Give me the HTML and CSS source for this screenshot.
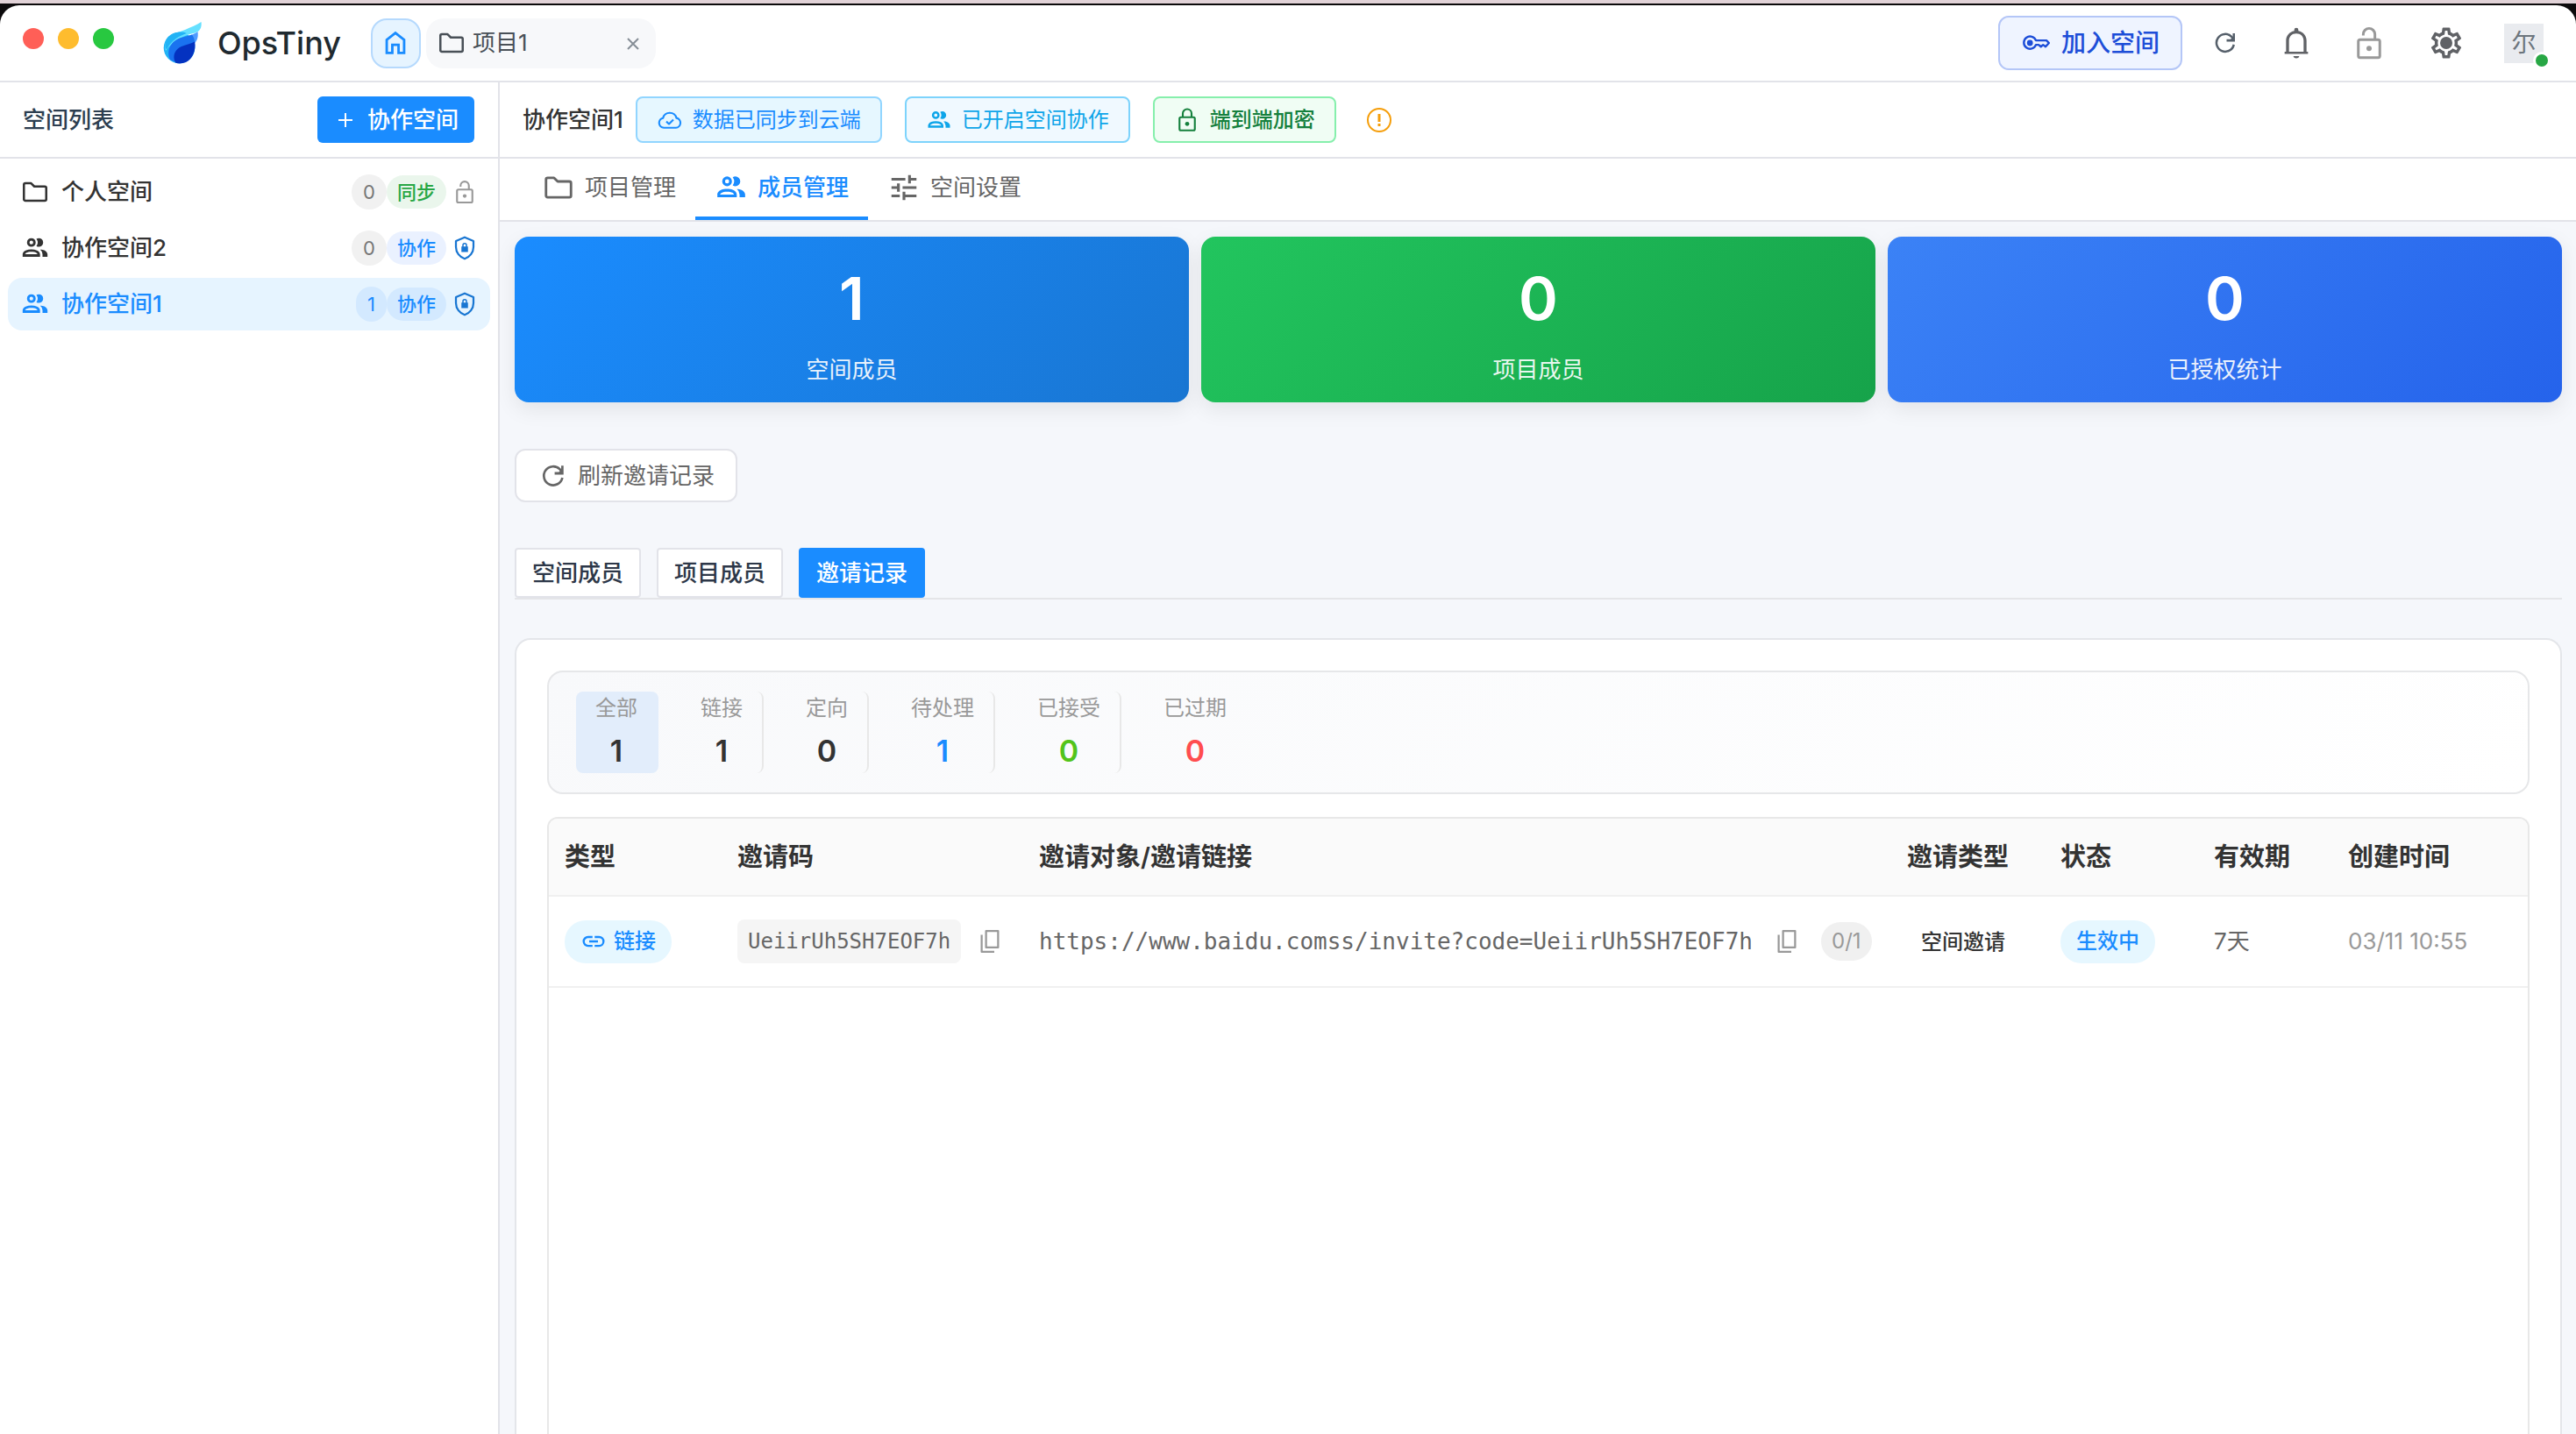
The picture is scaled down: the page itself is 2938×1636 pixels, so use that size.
FILE: index.html
```html
<!DOCTYPE html>
<html lang="zh-CN">

<head>
    <meta charset="UTF-8">
    <meta name="viewport" content="width=device-width, initial-scale=1.0">
    <title>OpsTiny</title>
    <link rel="stylesheet" href="styles.css">
</head>

<body>
    <!-- shared icons -->
    <svg class="sprite" width="0" height="0" aria-hidden="true">
        <symbol id="i-folder" viewBox="0 0 24 24">
            <path d="M3 6.2c0-.7.5-1.2 1.2-1.2h4.6l2.6 2.6h8.4c.7 0 1.2.5 1.2 1.2v9c0 .7-.5 1.2-1.2 1.2H4.2c-.7 0-1.2-.5-1.2-1.2z" fill="none" stroke="currentColor" stroke-width="1.8" stroke-linejoin="round"/>
        </symbol>
        <symbol id="i-people" viewBox="0 0 24 24">
            <path fill="currentColor" d="M13.07 10.41A5 5 0 0 0 13.07 4.59A3.39 3.39 0 0 1 15 4A3.5 3.5 0 0 1 15 11A3.39 3.39 0 0 1 13.07 10.41M5.5 7.5A3.5 3.5 0 1 1 9 11A3.5 3.5 0 0 1 5.5 7.5M7.5 7.5A1.5 1.5 0 1 0 9 6A1.5 1.5 0 0 0 7.5 7.5M16 17V19H2V17S2 13 9 13 16 17 16 17M14 17C13.86 16.22 12.67 15 9 15S4.07 16.31 4 17M15.95 13A5.32 5.32 0 0 1 18 17V19H22V17S22 13.37 15.94 13Z"/>
        </symbol>
        <symbol id="i-tune" viewBox="0 0 24 24">
            <path fill="currentColor" d="M3 17v2h6v-2H3zM3 5v2h10V5H3zm10 16v-2h8v-2h-8v-2h-2v6h2zM7 9v2H3v2h4v2h2V9H7zm14 4v-2H11v2h10zm-6-4h2V7h4V5h-4V3h-2v6z"/>
        </symbol>
        <symbol id="i-refresh" viewBox="0 0 24 24">
            <path fill="none" stroke="currentColor" stroke-width="2" d="M19.800 13.500a8 8 0 1 1-2.100-7.200L19.500 8.400"/>
            <path fill="currentColor" d="M20.800 3.200v7.600h-7.600V8.600h3.600l2-2V3.200z"/>
        </symbol>
        <symbol id="i-unlock" viewBox="0 0 24 24">
            <rect x="5" y="9.800" width="14" height="11.800" rx="1.200" fill="none" stroke="currentColor" stroke-width="1.700"/>
            <path fill="none" stroke="currentColor" stroke-width="1.700" d="M8.200 7.200V6.300a3.800 3.800 0 0 1 7.600 0v3.500"/>
            <circle cx="12" cy="15.600" r="1.700" fill="currentColor"/>
        </symbol>
        <symbol id="i-lock" viewBox="0 0 24 24">
            <rect x="5" y="9.400" width="14" height="12" rx="1.200" fill="none" stroke="currentColor" stroke-width="1.700"/>
            <path fill="none" stroke="currentColor" stroke-width="1.700" d="M8 9.400V6a4 4 0 0 1 8 0v3.400"/>
            <circle cx="12" cy="15.400" r="1.900" fill="currentColor"/>
        </symbol>
        <symbol id="i-shield" viewBox="0 0 24 24">
            <path fill="none" stroke="currentColor" stroke-width="1.8" stroke-linejoin="round" d="M12 2.2l8 3.4v5.4c0 5-3.4 9.3-8 10.8-4.600-1.500-8-5.800-8-10.800V5.600z"/>
            <path fill="currentColor" d="M9.800 10.500V9.400a2.200 2.200 0 0 1 4.400 0v1.100h.8v5H9v-5zm1.200 0h2V9.400a1 1 0 0 0-2 0z"/>
        </symbol>
        <symbol id="i-copy" viewBox="0 0 24 24">
            <path fill="none" stroke="currentColor" stroke-width="1.8" stroke-linejoin="round" d="M8.500 2.500h11v15h-11zM4.500 6v15.500H16"/>
        </symbol>
        <symbol id="i-link" viewBox="0 0 24 24">
            <path fill="currentColor" d="M3.900 12c0-1.710 1.390-3.100 3.100-3.100h4V7H7a5 5 0 0 0 0 10h4v-1.900H7c-1.710 0-3.100-1.390-3.100-3.100M8 13h8v-2H8m9-4h-4v1.900h4a3.100 3.100 0 0 1 0 6.200h-4V17h4a5 5 0 0 0 0-10z"/>
        </symbol>
    </svg>

    <div class="window">
        <header class="titlebar">
            <div class="lights">
                <span class="light red"></span>
                <span class="light yellow"></span>
                <span class="light green"></span>
            </div>
            <div class="brand">
                <svg class="logo" viewBox="0 0 44 48">
                    <circle cx="18.500" cy="29.500" r="17.800" fill="#22b3f5"/>
                    <path fill="#66e0ff" d="M7 17C17 11 33 7 43.500 0c1 7-2 11-7 12.500C25 15 12 20 3 33c-2-7 0-12 4-16z"/>
                    <path fill="#22b3f5" d="M5 18c6-6 15-8 22-5-9 3-17 8-22 17-3 4-4-6 0-12z"/>
                    <path fill="#4f9bff" d="M16 20c8-3 17-4 23.500-9 1 7-1 12-6 15z"/>
                    <path fill="#1a73f0" d="M8 43C3 33 9 22 19 18.500c6-2 11-3 14-4 3 4 4 10 3 16C32 44 18 50 8 43z"/>
                    <path fill="#0432c0" d="M14 46.500C10 38 14 31 21 28c6-2.500 11-3 15-5.500 2 11-3 20-10 23.500-4 1.500-8 2-12 .5z"/>
                </svg>
                <span class="brand-name">OpsTiny</span>
            </div>
            <nav class="win-tabs">
                <button class="home" aria-label="首页">
                    <svg class="icon s34" viewBox="0 0 24 24"><path fill="none" stroke="currentColor" stroke-width="2" d="M5 20V9.500L12 4l7 5.500V20h-4.500v-6.500h-5V20z"/></svg>
                </button>
                <div class="win-tab">
                    <svg class="icon s34"><use href="#i-folder"/></svg>
                    <span>项目1</span>
                    <button class="close" aria-label="关闭">
                        <svg class="icon s20" viewBox="0 0 20 20"><path stroke="currentColor" stroke-width="2" d="M4 5l12 12M16 5L4 17"/></svg>
                    </button>
                </div>
            </nav>
            <div class="actions">
                <button class="join">
                    <svg class="icon s34" viewBox="0 0 24 24">
                        <path fill="none" stroke="currentColor" stroke-width="1.700" stroke-linejoin="round" d="M12 10h8.500l2 2-2.700 3-2-1.500-1.800 1.500-1.800-1.500H12a5 5 0 1 1 0-3.500z"/>
                        <circle cx="7.200" cy="12" r="2.400" fill="currentColor"/>
                    </svg>
                    <span>加入空间</span>
                </button>
                <button class="tool refresh" aria-label="刷新"><svg class="icon s30"><use href="#i-refresh"/></svg></button>
                <button class="tool" aria-label="通知">
                    <svg class="icon s40" viewBox="0 0 24 24"><path fill="currentColor" d="M12 22.500c1.200 0 2-.6 2-1.500h-4c0 .9.800 1.500 2 1.500M19 18v-7.500c0-3.400-2.200-6-5.600-6.700V3a1.400 1.400 0 0 0-2.800 0v.8C7.200 4.500 5 7.100 5 10.500V18H4v1.500h16V18zM7 18v-7.500c0-3 2-5 5-5s5 2 5 5V18z"/></svg>
                </button>
                <button class="tool light-tool" aria-label="解锁"><svg class="icon s42"><use href="#i-unlock"/></svg></button>
                <button class="tool" aria-label="设置">
                    <svg class="icon s42" viewBox="0 0 24 24"><circle cx="12" cy="12" r="4" fill="currentColor"/><path fill="currentColor" d="M10,22C9.750,22 9.540,21.820 9.500,21.580L9.130,18.930C8.500,18.680 7.960,18.340 7.440,17.940L4.950,18.950C4.730,19.030 4.460,18.950 4.340,18.730L2.340,15.270C2.210,15.050 2.270,14.780 2.460,14.630L4.570,12.970L4.500,12L4.570,11L2.460,9.370C2.270,9.220 2.210,8.950 2.340,8.730L4.340,5.270C4.460,5.050 4.730,4.960 4.950,5.050L7.440,6.050C7.960,5.660 8.500,5.320 9.130,5.070L9.500,2.420C9.540,2.180 9.750,2 10,2H14C14.250,2 14.460,2.180 14.500,2.420L14.870,5.070C15.500,5.320 16.040,5.660 16.560,6.050L19.050,5.050C19.270,4.960 19.540,5.050 19.660,5.270L21.660,8.730C21.790,8.950 21.730,9.220 21.540,9.370L19.430,11L19.500,12L19.430,13L21.540,14.630C21.730,14.780 21.790,15.050 21.660,15.270L19.660,18.730C19.540,18.950 19.270,19.040 19.050,18.950L16.560,17.950C16.040,18.340 15.500,18.680 14.870,18.930L14.500,21.580C14.460,21.820 14.250,22 14,22H10M11.250,4L10.880,6.610C9.680,6.860 8.620,7.500 7.850,8.390L5.440,7.350L4.690,8.650L6.800,10.200C6.400,11.370 6.400,12.640 6.800,13.800L4.680,15.360L5.430,16.660L7.860,15.620C8.630,16.500 9.680,17.140 10.870,17.380L11.240,20H12.760L13.130,17.390C14.320,17.140 15.370,16.500 16.140,15.620L18.570,16.660L19.320,15.360L17.200,13.810C17.600,12.640 17.600,11.370 17.200,10.200L19.310,8.650L18.560,7.350L16.150,8.390C15.380,7.500 14.320,6.860 13.120,6.620L12.750,4H11.250Z"/></svg>
                </button>
                <div class="avatar">尔<span class="online"></span></div>
            </div>
        </header>

        <div class="layout">
            <aside class="sidebar">
                <div class="sidebar-head">
                    <h2>空间列表</h2>
                    <button class="create"><svg class="icon s20" viewBox="0 0 20 20"><path stroke="currentColor" stroke-width="2" d="M10 2v16M2 10h16"/></svg>协作空间</button>
                </div>
                <ul class="spaces">
                    <li class="space">
                        <svg class="icon s34"><use href="#i-folder"/></svg>
                        <span class="space-name">个人空间</span>
                        <span class="count">0</span>
                        <span class="tag sync">同步</span>
                        <svg class="icon s30 grey"><use href="#i-unlock"/></svg>
                    </li>
                    <li class="space">
                        <svg class="icon s34"><use href="#i-people"/></svg>
                        <span class="space-name">协作空间2</span>
                        <span class="count">0</span>
                        <span class="tag">协作</span>
                        <svg class="icon s30 shield"><use href="#i-shield"/></svg>
                    </li>
                    <li class="space active">
                        <svg class="icon s34"><use href="#i-people"/></svg>
                        <span class="space-name">协作空间1</span>
                        <span class="count">1</span>
                        <span class="tag">协作</span>
                        <svg class="icon s30 shield"><use href="#i-shield"/></svg>
                    </li>
                </ul>
            </aside>

            <main class="main">
                <div class="space-head">
                    <h1>协作空间1</h1>
                    <span class="badge cloud">
                        <svg class="icon s30" viewBox="0 0 24 24"><path fill="none" stroke="currentColor" stroke-width="1.700" stroke-linejoin="round" d="M6.500 19a4.500 4.500 0 0 1-.7-8.900 6.300 6.300 0 0 1 12.200 0A4.500 4.500 0 0 1 17.500 19zM8.800 13.300l2.400 2.300 4-4"/></svg>
                        数据已同步到云端
                    </span>
                    <span class="badge team"><svg class="icon s30"><use href="#i-people"/></svg>已开启空间协作</span>
                    <span class="badge secure"><svg class="icon s30"><use href="#i-lock"/></svg>端到端加密</span>
                    <svg class="icon s30 warn" viewBox="0 0 30 30"><circle cx="15" cy="15" r="13" fill="none" stroke="currentColor" stroke-width="2"/><path stroke="currentColor" stroke-width="3" d="M15 8v9M15 19v3"/></svg>
                </div>

                <nav class="tabs">
                    <a class="tab" href="#"><svg class="icon s38"><use href="#i-folder"/></svg>项目管理</a>
                    <a class="tab active" href="#"><svg class="icon s38"><use href="#i-people"/></svg>成员管理</a>
                    <a class="tab" href="#"><svg class="icon s38"><use href="#i-tune"/></svg>空间设置</a>
                </nav>

                <div class="content">
                    <section class="cards">
                        <div class="card blue"><b>1</b><span>空间成员</span></div>
                        <div class="card green"><b>0</b><span>项目成员</span></div>
                        <div class="card indigo"><b>0</b><span>已授权统计</span></div>
                    </section>

                    <button class="reload"><svg class="icon s32"><use href="#i-refresh"/></svg>刷新邀请记录</button>

                    <div class="segments">
                        <button class="segment">空间成员</button>
                        <button class="segment">项目成员</button>
                        <button class="segment active">邀请记录</button>
                    </div>

                    <section class="panel">
                        <div class="filters">
                            <button class="filter active"><span>全部</span><b>1</b></button>
                            <button class="filter"><span>链接</span><b>1</b></button>
                            <button class="filter"><span>定向</span><b>0</b></button>
                            <button class="filter pending"><span>待处理</span><b>1</b></button>
                            <button class="filter accepted"><span>已接受</span><b>0</b></button>
                            <button class="filter expired"><span>已过期</span><b>0</b></button>
                        </div>

                        <div class="table-wrap">
                            <table class="invites">
                                <colgroup>
                                    <col class="c-type">
                                    <col class="c-code">
                                    <col>
                                    <col class="c-kind">
                                    <col class="c-state">
                                    <col class="c-valid">
                                    <col class="c-time">
                                </colgroup>
                                <thead>
                                    <tr>
                                        <th>类型</th>
                                        <th>邀请码</th>
                                        <th>邀请对象/邀请链接</th>
                                        <th>邀请类型</th>
                                        <th>状态</th>
                                        <th>有效期</th>
                                        <th>创建时间</th>
                                    </tr>
                                </thead>
                                <tbody>
                                    <tr>
                                        <td><span class="pill"><svg class="icon s30"><use href="#i-link"/></svg>链接</span></td>
                                        <td>
                                            <div class="cell">
                                                <code class="code">UeiirUh5SH7EOF7h</code>
                                                <button class="copy" aria-label="复制"><svg class="icon s30"><use href="#i-copy"/></svg></button>
                                            </div>
                                        </td>
                                        <td>
                                            <div class="cell target">
                                                <span class="url">https://www.baidu.comss/invite?code=UeiirUh5SH7EOF7h</span>
                                                <button class="copy" aria-label="复制"><svg class="icon s30"><use href="#i-copy"/></svg></button>
                                                <span class="used">0/1</span>
                                            </div>
                                        </td>
                                        <td><span class="kind">空间邀请</span></td>
                                        <td><span class="pill">生效中</span></td>
                                        <td class="valid">7天</td>
                                        <td class="time">03/11 10:55</td>
                                    </tr>
                                </tbody>
                            </table>
                        </div>
                    </section>
                </div>
            </main>
        </div>
    </div>
</body>

</html>
```
FILE: styles.css
```css
* {
    box-sizing: border-box;
}

html {
    height: 100%;
    background-color: #0c0a0b;
}

body {
    height: 100%;
    margin: 0;
    padding-top: 2px;
    border-top: 4px solid #e1d2d7;
    overflow: hidden;
    font-family: Inter, "Noto Sans CJK SC", sans-serif;
    font-size: 26px;
    line-height: 38px;
    color: #333;
}

button {
    font: inherit;
    color: inherit;
    background: none;
    border: none;
    padding: 0;
    cursor: pointer;
}

a {
    text-decoration: none;
}

h1,
h2 {
    margin: 0;
    font-size: 26px;
    font-weight: 500;
}

.sprite {
    position: absolute;
}

.icon {
    display: block;
    flex: none;
}

.s20 { width: 20px; height: 20px; }
.s30 { width: 30px; height: 30px; }
.s32 { width: 32px; height: 32px; }
.s34 { width: 34px; height: 34px; }
.s38 { width: 38px; height: 38px; }
.s40 { width: 40px; height: 40px; }
.s42 { width: 42px; height: 42px; }

.window {
    height: 100%;
    display: flex;
    flex-direction: column;
    background-color: #fff;
    border-radius: 22px 22px 0 0;
    overflow: hidden;
}

/* title bar */
.titlebar {
    flex: none;
    display: flex;
    align-items: center;
    height: 88px;
    padding: 0 37px 0 26px;
    border-bottom: 2px solid #e2e3e9;
}

.lights {
    display: flex;
    gap: 16px;
    margin-bottom: 10px;
}

.light {
    width: 24px;
    height: 24px;
    border-radius: 50%;
}

.red { background-color: #ff5f57; }
.yellow { background-color: #febc2e; }
.green { background-color: #28c840; }

.brand {
    display: flex;
    align-items: center;
    gap: 18px;
    margin-left: 56px;
}

.logo {
    width: 44px;
    height: 48px;
}

.brand-name {
    font-size: 36px;
    font-weight: 500;
    color: #1f2a30;
}

.win-tabs {
    display: flex;
    gap: 6px;
    margin-left: 34px;
}

.home {
    display: flex;
    align-items: center;
    justify-content: center;
    width: 57px;
    height: 57px;
    color: #1a8cff;
    background-color: #e6f4ff;
    border: 2px solid #b5d9fd;
    border-radius: 18px;
}

.win-tab {
    display: flex;
    align-items: center;
    gap: 7px;
    width: 262px;
    height: 57px;
    padding: 0 16px 0 12px;
    color: #495057;
    background-color: #f7f8fa;
    border-radius: 20px;
}

.close {
    margin-left: auto;
    color: #868e96;
}

.actions {
    display: flex;
    align-items: center;
    margin-left: auto;
}

.join {
    display: flex;
    align-items: center;
    gap: 12px;
    height: 62px;
    padding: 0 24px;
    font-size: 28px;
    font-weight: 500;
    color: #1d4ed8;
    background-color: #eff4ff;
    border: 2px solid #b4c6f7;
    border-radius: 12px;
}

.tool {
    margin-left: 46px;
    color: #606266;
}

.tool.refresh {
    margin-left: 34px;
    color: #56606b;
}

.light-tool {
    margin-left: 42px;
    color: #999;
}

.avatar {
    position: relative;
    width: 45px;
    height: 45px;
    margin-left: 45px;
    line-height: 44px;
    text-align: center;
    font-size: 28px;
    color: #6c757d;
    background-color: #e9ebef;
}

.online {
    position: absolute;
    right: -8px;
    bottom: -7px;
    width: 20px;
    height: 20px;
    background-color: #28a745;
    border: 3px solid #fff;
    border-radius: 50%;
}

.layout {
    flex: 1;
    min-height: 0;
    display: flex;
}

/* sidebar */
.sidebar {
    flex: none;
    width: 570px;
    border-right: 2px solid #e2e3e9;
}

.sidebar-head,
.space-head {
    display: flex;
    align-items: center;
    height: 87px;
    border-bottom: 2px solid #e2e3e9;
}

.sidebar-head {
    justify-content: space-between;
    padding: 0 27px 0 26px;
    color: #2c3e50;
}

.create {
    display: flex;
    align-items: center;
    gap: 15px;
    height: 53px;
    padding: 0 18px 0 22px;
    font-weight: 500;
    color: #fff;
    background-color: #1a8cff;
    border-radius: 6px;
}

.spaces {
    list-style: none;
    display: flex;
    flex-direction: column;
    gap: 4px;
    margin: 0;
    padding: 8px 9px;
}

.space {
    display: flex;
    align-items: center;
    height: 60px;
    padding: 0 14px;
    border-radius: 16px;
}

.space-name {
    flex: 1;
    margin-left: 13px;
    font-weight: 500;
}

.count,
.tag {
    line-height: 38px;
    font-size: 22px;
    border-radius: 20px;
}

.count {
    padding: 1px 13px;
    color: #777;
    background-color: #f1f1f1;
}

.tag {
    margin-right: 6px;
    padding: 0 12px;
    font-weight: 500;
    color: #1a8cff;
    background-color: #eaf1ff;
}

.tag.sync {
    color: #28a745;
    background-color: #eaf6ec;
}

.grey {
    color: #999;
}

.shield {
    color: #1976d2;
}

.space.active {
    color: #1a8cff;
    background-color: #e6f4ff;
}

.active .count,
.active .tag {
    color: #1a8cff;
    background-color: #d3e9ff;
}

/* main */
.main {
    flex: 1;
    min-width: 0;
    display: flex;
    flex-direction: column;
    background-color: #f5f7fb;
}

.space-head {
    flex: none;
    padding-left: 26px;
    background-color: #fff;
}

.badge {
    display: flex;
    align-items: center;
    gap: 11px;
    height: 53px;
    margin-right: 26px;
    padding: 0 22px;
    font-size: 24px;
    border: 2px solid;
    border-radius: 8px;
}

.cloud {
    margin-left: 14px;
    color: #1a8cff;
    background-color: #e6f7ff;
    border-color: #91d5ff;
}

.team {
    color: #0ea5e9;
    background-color: #f0f9ff;
    border-color: #7dd3fc;
}

.secure {
    font-weight: 500;
    color: #15803d;
    background-color: #f0fdf4;
    border-color: #86efac;
}

.warn {
    margin-left: 8px;
    color: #f59e0b;
}

.tabs {
    flex: none;
    display: flex;
    height: 72px;
    padding-left: 26px;
    background-color: #fff;
    border-bottom: 2px solid #e2e3e9;
}

.tab {
    display: flex;
    align-items: center;
    gap: 11px;
    padding: 0 22px;
    color: #666;
    border-bottom: 4px solid transparent;
}

.tab.active {
    font-weight: 500;
    color: #1a8cff;
    border-bottom-color: #1a8cff;
}

.content {
    flex: 1;
    min-height: 0;
    display: flex;
    flex-direction: column;
    padding: 17px 16px 0 17px;
}

.cards {
    flex: none;
    display: grid;
    grid-template-columns: repeat(3, 1fr);
    gap: 14px;
}

.card {
    display: flex;
    flex-direction: column;
    align-items: center;
    gap: 16px;
    height: 189px;
    padding-top: 30px;
    color: #fff;
    border-radius: 16px;
    box-shadow: 0 8px 24px rgba(0, 0, 0, 0.08);
}

.card b {
    font-size: 68px;
    line-height: 80px;
    font-weight: 600;
}

.card span {
    line-height: 52px;
    opacity: 0.9;
}

.blue { background: linear-gradient(135deg, #1a8cff, #1976d2); }
.green.card { background: linear-gradient(135deg, #22c55e, #16a34a); }
.indigo { background: linear-gradient(135deg, #3b82f6, #2563eb); }

.reload {
    flex: none;
    align-self: flex-start;
    display: flex;
    align-items: center;
    gap: 12px;
    height: 61px;
    margin-top: 53px;
    padding: 0 24px 0 26px;
    color: #666;
    background-color: #fff;
    border: 2px solid #e2e3e9;
    border-radius: 12px;
}

.segments {
    flex: none;
    display: flex;
    gap: 18px;
    margin-top: 52px;
    border-bottom: 2px solid #e4e5e8;
}

.segment {
    height: 57px;
    padding: 0 18px;
    font-weight: 500;
    color: #2d3748;
    background-color: #fff;
    border: 2px solid #e2e3e9;
    border-radius: 4px;
}

.segment.active {
    color: #fff;
    background-color: #1a8cff;
    border-color: #1a8cff;
}

.panel {
    flex: 1;
    min-height: 0;
    display: flex;
    flex-direction: column;
    gap: 26px;
    margin-top: 44px;
    padding: 35px 35px 0;
    background-color: #fff;
    border: 2px solid #e4e6ea;
    border-bottom: none;
    border-radius: 18px 18px 0 0;
}

/* invite filters */
.filters {
    flex: none;
    display: flex;
    gap: 26px;
    padding: 22px 31px;
    background: linear-gradient(135deg, #f8f9fb, #fff);
    border: 2px solid #e6e7e9;
    border-radius: 18px;
}

.filter {
    display: flex;
    flex-direction: column;
    align-items: center;
    gap: 8px;
    height: 93px;
    padding: 0 22px;
    border-right: 2px solid #e8e8e8;
    border-radius: 8px;
}

.filter span {
    line-height: 38px;
    font-size: 24px;
    color: #999;
}

.filter b {
    line-height: 44px;
    font-size: 34px;
    font-weight: 600;
}

.filter.active {
    background-color: #e2edfb;
    border-color: #e2edfb;
}

.filter:last-child {
    border-color: transparent;
}

.pending b { color: #1a8cff; }
.accepted b { color: #52c41a; }
.expired b { color: #ff4d4f; }

/* invite table */
.table-wrap {
    flex: 1;
    border: 2px solid #e8e8e8;
    border-bottom: none;
    border-radius: 12px 12px 0 0;
    overflow: hidden;
}

.invites {
    width: 100%;
    table-layout: fixed;
    border-collapse: collapse;
}

.c-type { width: 197px; }
.c-code { width: 344px; }
.c-kind { width: 175px; }
.c-state { width: 175px; }
.c-valid { width: 153px; }
.c-time { width: 223px; }

.invites th,
.invites td {
    padding: 0 0 0 18px;
    text-align: left;
    border-bottom: 2px solid #f0f0f0;
}

.invites th {
    height: 88px;
    font-size: 29px;
    font-weight: 600;
    background-color: #fafafa;
}

.invites td {
    height: 104px;
}

.pill {
    display: inline-flex;
    align-items: center;
    gap: 8px;
    height: 49px;
    padding: 0 18px;
    font-size: 24px;
    font-weight: 500;
    color: #1a8cff;
    background-color: #e6f7ff;
    border-radius: 24px;
    vertical-align: middle;
}

.cell {
    display: flex;
    align-items: center;
    gap: 18px;
}

.target {
    gap: 24px;
}

.code,
.url {
    font-family: "DejaVu Sans Mono", monospace;
    color: #666;
}

.code {
    padding: 0 12px;
    line-height: 50px;
    font-size: 24px;
    background-color: #f5f5f5;
    border-radius: 8px;
}

.copy {
    color: #999;
}

.used {
    padding: 0 12px;
    line-height: 44px;
    font-size: 24px;
    color: #999;
    background-color: #f0f0f0;
    border-radius: 22px;
}

.kind {
    padding-left: 16px;
    font-size: 24px;
    font-weight: 500;
}

.valid {
    color: #666;
}

.time {
    color: #999;
}
```
